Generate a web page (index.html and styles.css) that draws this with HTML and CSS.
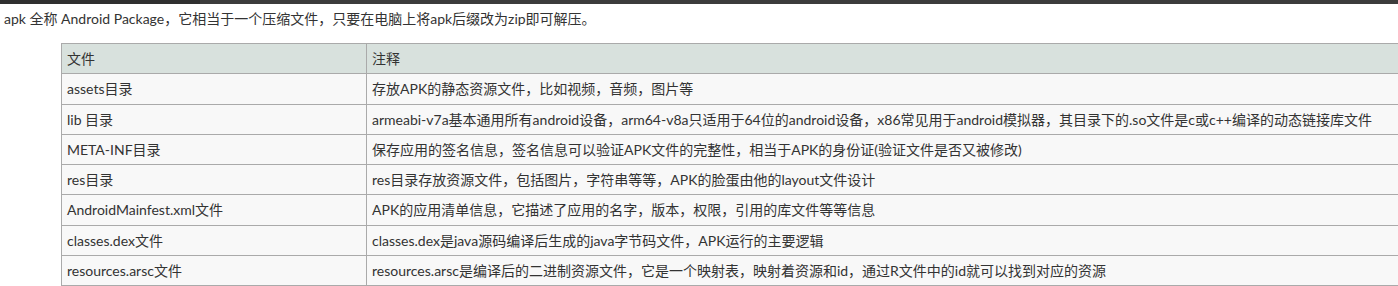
FILE: index.html
```html
<!DOCTYPE html>
<html lang="zh-CN">
<head>
<meta charset="utf-8">
<link rel="stylesheet" href="styles.css">
</head>
<body>
<div class="topbar"><div class="topbar-left"></div><div class="topbar-right"></div></div>
<p class="intro">apk 全称 Android Package，它相当于一个压缩文件，只要在电脑上将apk后缀改为zip即可解压。</p>
<table class="files">
  <thead>
    <tr><th class="c1">文件</th><th>注释</th></tr>
  </thead>
  <tbody>
    <tr><td>assets目录</td><td>存放APK的静态资源文件，比如视频，音频，图片等</td></tr>
    <tr><td>lib 目录</td><td>armeabi-v7a基本通用所有android设备，arm64-v8a只适用于64位的android设备，x86常见用于android模拟器，其目录下的.so文件是c或c++编译的动态链接库文件</td></tr>
    <tr><td>META-INF目录</td><td>保存应用的签名信息，签名信息可以验证APK文件的完整性，相当于APK的身份证(验证文件是否又被修改)</td></tr>
    <tr><td>res目录</td><td>res目录存放资源文件，包括图片，字符串等等，APK的脸蛋由他的layout文件设计</td></tr>
    <tr><td>AndroidMainfest.xml文件</td><td>APK的应用清单信息，它描述了应用的名字，版本，权限，引用的库文件等等信息</td></tr>
    <tr><td>classes.dex文件</td><td>classes.dex是java源码编译后生成的java字节码文件，APK运行的主要逻辑</td></tr>
    <tr><td>resources.arsc文件</td><td>resources.arsc是编译后的二进制资源文件，它是一个映射表，映射着资源和id，通过R文件中的id就可以找到对应的资源</td></tr>
  </tbody>
</table>
</body>
</html>
```
FILE: styles.css
```css
html, body {
  margin: 0;
  padding: 0;
  background: #ffffff;
  overflow: hidden;
}
body {
  font-family: Lato, "Noto Sans CJK SC", sans-serif;
  font-size: 14px;
  color: #333333;
  width: 1398px;
  height: 286px;
}
.topbar {
  display: flex;
  height: 4px;
}
.topbar-left {
  width: 200px;
  background: #2f2f2f;
}
.topbar-right {
  flex: 1;
  background: #3c3c3c;
}
.intro {
  margin: 0;
  padding: 4px 0 0 4px;
  line-height: 22px;
  white-space: nowrap;
}
.files {
  margin: 13px 0 0 61px;
  border-collapse: collapse;
  width: 1420px;
  background: #f8f8f8;
}
.files th,
.files td {
  border: 1px solid #aaaaaa;
  padding: 4px 5px;
  line-height: 21.3px;
  text-align: left;
  font-weight: normal;
  white-space: nowrap;
}
.files th {
  background: #d8e1dd;
}
.files .c1 {
  width: 294px;
}
```
